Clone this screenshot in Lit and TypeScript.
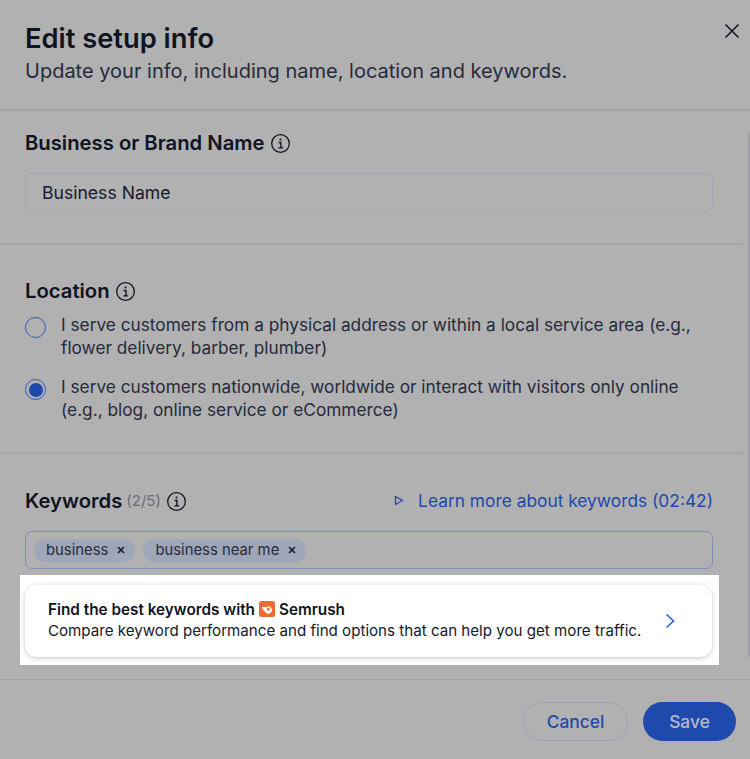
import { LitElement, html, css, svg } from "lit";
import { customElement } from "lit/decorators.js";

const info = html`<svg class="info" viewBox="0 0 20 20" fill="none"><circle cx="10" cy="10" r="8.4" stroke="#0f1322" stroke-width="1.2"/><circle cx="10" cy="6.2" r="1" fill="#0f1322"/><path d="M8.2 9h2.2v5M8 14.2h4.6" stroke="#0f1322" stroke-width="1.3"/></svg>`;
const x = svg`<path d="M2 2l6 6M8 2l-6 6" stroke="#15192b" stroke-width="1.6"/>`;

@customElement("app-root")
export class AppRoot extends LitElement {
  static styles = css`
    :host { display: block; width: 750px; height: 759px; background: #b1b1b1; overflow: hidden; position: relative;
      font-family: "Inter", "Liberation Sans", sans-serif; color: #0f1322; }
    * { box-sizing: border-box; }
    .close { position: absolute; top: 23px; left: 724px; width: 16px; height: 16px; }
    .thumb { position: absolute; top: 133px; right: 0; width: 2px; height: 524px; background: #9d9ea6; }
    header { height: 111px; padding: 22px 25px 0; border-bottom: 2px solid #a3a4a8; }
    h1 { margin: 0; font-size: 27.3px; line-height: 34px; font-weight: 600; }
    .sub { margin: 2px 0 0; font-size: 20px; line-height: 27px; color: #262a3c; }
    .sec { padding: 0 25px; }
    .rule { height: 2px; background: #a5a6a9; margin-right: 7px; }
    .title { display: flex; align-items: center; gap: 5px; font-size: 20.25px; line-height: 26px; font-weight: 600; }
    .info { width: 21px; height: 21px; flex: none; }
    .name { padding-top: 19px; height: 132px; }
    .input { margin-top: 17px; width: 688px; height: 39px; border: 1px solid #a0a6b8; border-radius: 7px;
      padding-left: 16px; display: flex; align-items: center; font-size: 17.6px; color: #15192b; }
    .loc { padding-top: 33px; height: 207px; }
    .opt { display: flex; gap: 15px; font-size: 17.26px; line-height: 23px; color: #262a3c; }
    .opts { margin-top: 9px; display: flex; flex-direction: column; gap: 16px; }
    .radio { width: 21px; height: 21px; border-radius: 50%; border: 1.5px solid #2f56c4; flex: none; margin-top: 4px;
      display: flex; align-items: center; justify-content: center; }
    .radio i { width: 14px; height: 14px; border-radius: 50%; background: #1f4aad; }
    .kw { padding-top: 34px; }
    .kwhead { display: flex; align-items: center; justify-content: space-between; padding-right: 12px; height: 26px; }
    .count { font-size: 15px; font-weight: 400; color: #6a6d78; margin-left: -1px; }
    .learn { display: flex; align-items: center; gap: 14px; font-size: 17.35px; color: #2148ad; margin-top: -2px; }
    .learn svg { width: 10px; height: 11px; margin-left: -1px; }
    .tags { margin-top: 17px; width: 688px; height: 38px; border: 1px solid #7d8fb8; border-radius: 7px;
      padding: 0 8px; display: flex; align-items: center; gap: 8px; }
    .tag { height: 23px; border-radius: 12px; background: #9fa6b8; padding: 0 9px 0 12px; display: flex; align-items: center;
      gap: 8px; font-size: 14.85px; color: #262a3c; }
    .tag svg { width: 10px; height: 10px; }
    .hl { margin: 6px 0 0 -5px; width: 699px; height: 90px; background: #fff; padding: 10px 7px 8px 5px; }
    .card { height: 72px; width: 687px; border-radius: 12px; background: #fff;
      box-shadow: 0 1px 5px rgba(30,40,80,.25); padding: 0 0 3px 23px;
      display: flex; align-items: center; justify-content: space-between; }
    .ct { font-size: 15.3px; line-height: 21px; font-weight: 600; display: flex; align-items: center; gap: 4px; color: #0f1322; }
    .cd { font-size: 15.13px; line-height: 21px; color: #15192b; }
    .sem { width: 16px; height: 16px; flex: none; }
    .chev { width: 12px; height: 16px; margin-right: 36px; margin-top: 3px; }
    .frule { position: absolute; left: 0; right: 0; top: 679px; height: 1px; background: #a0a1a4; }
    footer { position: absolute; top: 702px; right: 14px; display: flex; gap: 15px; }
    button { height: 39px; border-radius: 20px; font: inherit; font-size: 17.4px; font-weight: 500; padding: 0; }
    .cancel { width: 105px; background: transparent; border: 1px solid #9aa3bb; color: #2148ad; }
    .save { width: 93px; background: #1f4aad; border: none; color: #b5bacb; }
  `;

  render() {
    return html`
      <svg class="close" viewBox="0 0 16 16" fill="none"><path d="M1.5 1.5l13 13M14.5 1.5l-13 13" stroke="#0f1322" stroke-width="1.5"/></svg>
      <div class="thumb"></div>
      <header>
        <h1>Edit setup info</h1>
        <p class="sub">Update your info, including name, location and keywords.</p>
      </header>
      <section class="sec name">
        <div class="title">Business or Brand Name ${info}</div>
        <div class="input">Business Name</div>
      </section>
      <div class="rule"></div>
      <section class="sec loc">
        <div class="title">Location ${info}</div>
        <div class="opts">
          <div class="opt"><span class="radio"></span><span>I serve customers from a physical address or within a local service area (e.g.,<br />flower delivery, barber, plumber)</span></div>
          <div class="opt"><span class="radio"><i></i></span><span>I serve customers nationwide, worldwide or interact with visitors only online<br />(e.g., blog, online service or eCommerce)</span></div>
        </div>
      </section>
      <div class="rule"></div>
      <section class="sec kw">
        <div class="kwhead">
          <div class="title">Keywords <span class="count">(2/5)</span> ${info}</div>
          <div class="learn">
            <svg viewBox="0 0 10 11" fill="none"><path d="M1.5 1.5l7 4-7 4z" stroke="#2148ad" stroke-width="1.3"/></svg>
            Learn more about keywords (02:42)
          </div>
        </div>
        <div class="tags">
          <span class="tag">business <svg viewBox="0 0 10 10" fill="none">${x}</svg></span>
          <span class="tag">business near me <svg viewBox="0 0 10 10" fill="none">${x}</svg></span>
        </div>
        <div class="hl">
          <div class="card">
            <div>
              <div class="ct">Find the best keywords with
                <svg class="sem" viewBox="0 0 16 16"><rect width="16" height="16" rx="2.5" fill="#ee6b33"/><path fill-rule="evenodd" d="M2.8 6h4.6a3.600 3.600 0 1 1-1.400 4.400C4.600 9.700 3.500 8 2.800 6zM9.300 6.600a1.500 1.500 0 1 0 0 3 1.500 1.500 0 0 0 0-3z" fill="#fff"/></svg>
                Semrush</div>
              <div class="cd">Compare keyword performance and find options that can help you get more traffic.</div>
            </div>
            <svg class="chev" viewBox="0 0 12 16" fill="none"><path d="M2.500 1.500l7 6.500-7 6.500" stroke="#2563eb" stroke-width="1.600"/></svg>
          </div>
        </div>
      </section>
      <div class="frule"></div>
      <footer>
        <button class="cancel">Cancel</button>
        <button class="save">Save</button>
      </footer>
    `;
  }
}
